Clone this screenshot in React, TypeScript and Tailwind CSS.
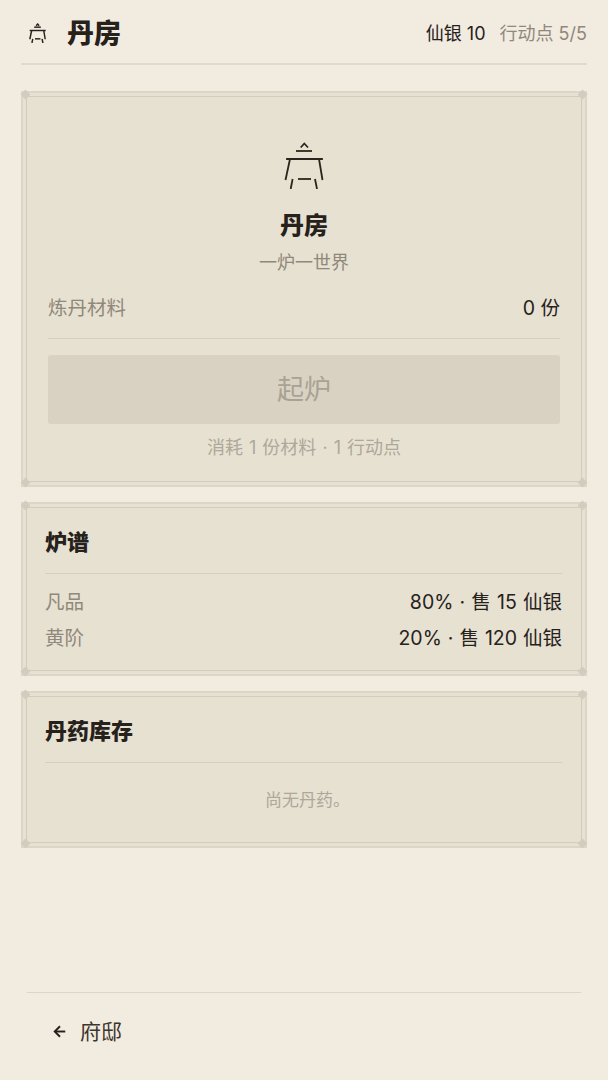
import React from "react";

const Diamond = ({ className }: { className: string }) => (
  <span className={`absolute w-[7px] h-[7px] rotate-45 bg-[#d2ccbe] ${className}`} />
);

const Card = ({ children, inner }: { children: React.ReactNode; inner: string }) => (
  <section className="relative border-2 border-[#dcd6c8] bg-[#e7e1d2] p-[3px]">
    <Diamond className="-left-[1px] -top-[2px]" />
    <Diamond className="-right-[1px] -top-[2px]" />
    <Diamond className="-left-[1px] -bottom-[1px]" />
    <Diamond className="-right-[1px] -bottom-[1px]" />
    <div className={`border border-[#d2ccbd] ${inner}`}>{children}</div>
  </section>
);

const Furnace = ({ className, sw = 1.8 }: { className: string; sw?: number }) => (
  <svg viewBox="0 0 40 48" fill="none" stroke="currentColor" strokeWidth={sw} className={className}>
    <path d="M16.7 6.5 L20.3 2.5 L24 6.5" />
    <path d="M12 10 H28" />
    <path d="M3 18 H38" strokeLinecap="square" />
    <path d="M6 18 L1.5 39" />
    <path d="M35 18 L38.5 39" />
    <path d="M8.6 38 L6.7 48" />
    <path d="M31 38 L33 48" />
    <path d="M14 38 H27" />
  </svg>
);

export default function App() {
  return (
    <div
      className="w-[608px] h-[1080px] bg-[#f2ebe0] text-[#26211b] flex flex-col overflow-hidden antialiased"
      style={{ fontFamily: 'Inter, "Noto Sans CJK SC", sans-serif' }}
    >
      <div className="px-[21px] flex-1 flex flex-col">
        <header className="h-[65px] border-b-2 border-[#e0dace] flex items-center justify-between pt-[3px]">
          <div className="flex items-center">
            <Furnace sw={3.5} className="w-[17px] h-[20px] ml-[8px] text-[#26211b]" />
            <h1 className="ml-[21px] text-[27px] font-black leading-none">丹房</h1>
          </div>
          <div className="flex items-center gap-[14px] text-[18px] leading-[27px]">
            <span>仙银 10</span>
            <span className="text-[#8f887b]">行动点 5/5</span>
          </div>
        </header>

        <div className="mt-[26px] flex flex-col gap-[15px]">
          <Card inner="h-[386px] px-[21px] pt-[44px] flex flex-col">
            <Furnace className="w-[40px] h-[48px] mx-auto text-[#2b251e]" />
            <h2 className="mt-[20px] text-center text-[24px] font-black leading-[33px]">丹房</h2>
            <p className="mt-[7px] text-center text-[18px] leading-[27px] text-[#8f887b]">一炉一世界</p>
            <div className="mt-[10px] h-[53px] flex items-center justify-between border-b border-[#d5cfc0] pb-[6px]">
              <span className="text-[19.5px] text-[#8f887b]">炼丹材料</span>
              <span className="text-[19.5px]">0 份</span>
            </div>
            <button className="mt-[16px] h-[69px] pt-[1px] rounded-[3px] bg-[#d9d2c2] text-[#a8a294] text-[27px]">起炉</button>
            <p className="mt-[11px] text-center text-[18px] leading-[26px] text-[#aea89a] [word-spacing:1px]">消耗 1 份材料 · 1 行动点</p>
          </Card>

          <Card inner="h-[164px] pl-[18px] pr-[19px] flex flex-col">
            <h3 className="h-[66px] pt-[4px] flex items-center text-[22px] font-black border-b border-[#d5cfc0]">炉谱</h3>
            <div className="mt-[11px] h-[36px] flex items-center justify-between text-[19.5px] [word-spacing:0.7px]">
              <span className="text-[#8f887b]">凡品</span>
              <span>80% · 售 15 仙银</span>
            </div>
            <div className="h-[36px] flex items-center justify-between text-[19.5px] [word-spacing:0.5px]">
              <span className="text-[#8f887b]">黄阶</span>
              <span>20% · 售 120 仙银</span>
            </div>
          </Card>

          <Card inner="h-[147px] pl-[18px] pr-[19px] flex flex-col">
            <h3 className="h-[66px] pt-[4px] flex items-center text-[22px] font-black border-b border-[#d5cfc0]">丹药库存</h3>
            <p className="mt-[24px] pl-[8px] text-center text-[17px] leading-[26px] text-[#aea89a]">尚无丹药。</p>
          </Card>
        </div>
      </div>

      <footer className="mx-[27px] h-[88px] border-t border-[#dcd6c9] flex items-center pl-[26px] pb-[10px]">
        <svg viewBox="0 0 16 16" fill="none" stroke="currentColor" strokeWidth="2.2" className="w-[14px] h-[15px]">
          <path d="M8 2 L2 8 L8 14" />
          <path d="M2 8 H14" />
        </svg>
        <span className="ml-[13px] text-[21px] text-[#3b352c]">府邸</span>
      </footer>
    </div>
  );
}
